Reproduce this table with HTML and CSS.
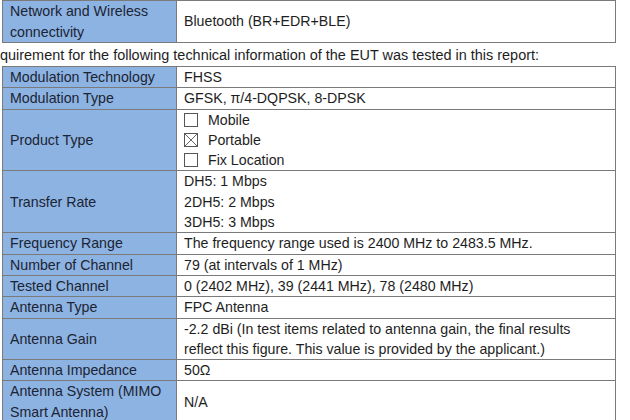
FILE: index.html
```html
<!DOCTYPE html>
<html>
<head>
<meta charset="utf-8">
<link rel="stylesheet" href="styles.css">
</head>
<body>
<div class="page">
<table class="spec">
  <tr class="two">
    <td class="key">Network and Wireless<br>connectivity</td>
    <td class="val">Bluetooth (BR+EDR+BLE)</td>
  </tr>
</table>
<p class="note">quirement for the following technical information of the EUT was tested in this report:</p>
<table class="spec">
  <tr><td class="key">Modulation Technology</td><td class="val">FHSS</td></tr>
  <tr><td class="key">Modulation Type</td><td class="val">GFSK, π/4-DQPSK, 8-DPSK</td></tr>
  <tr>
    <td class="key">Product Type</td>
    <td class="val">
      <div class="opt"><svg class="box" viewBox="0 0 14 14"><rect x="0.5" y="0.5" width="13" height="13" fill="none" stroke="#555"/></svg>Mobile</div>
      <div class="opt"><svg class="box" viewBox="0 0 14 14"><rect x="0.5" y="0.5" width="13" height="13" fill="none" stroke="#555"/><path d="M1 1L13 13M13 1L1 13" stroke="#666" stroke-width="1"/></svg>Portable</div>
      <div class="opt"><svg class="box" viewBox="0 0 14 14"><rect x="0.5" y="0.5" width="13" height="13" fill="none" stroke="#555"/></svg>Fix Location</div>
    </td>
  </tr>
  <tr>
    <td class="key">Transfer Rate</td>
    <td class="val">DH5: 1 Mbps<br>2DH5: 2 Mbps<br>3DH5: 3 Mbps</td>
  </tr>
  <tr><td class="key">Frequency Range</td><td class="val">The frequency range used is 2400 MHz to 2483.5 MHz.</td></tr>
  <tr><td class="key">Number of Channel</td><td class="val">79 (at intervals of 1 MHz)</td></tr>
  <tr><td class="key">Tested Channel</td><td class="val">0 (2402 MHz), 39 (2441 MHz), 78 (2480 MHz)</td></tr>
  <tr><td class="key">Antenna Type</td><td class="val">FPC Antenna</td></tr>
  <tr><td class="key">Antenna Gain</td><td class="val">-2.2 dBi (In test items related to antenna gain, the final results<br>reflect this figure. This value is provided by the applicant.)</td></tr>
  <tr><td class="key">Antenna Impedance</td><td class="val">50Ω</td></tr>
  <tr><td class="key">Antenna System (MIMO<br>Smart Antenna)</td><td class="val">N/A</td></tr>
</table>
</div>
</body>
</html>
```
FILE: styles.css
```css
html, body {
  margin: 0;
  padding: 0;
  background: #fff;
}
body {
  font-family: "Liberation Sans", Arial, sans-serif;
  font-size: 14.2px;
  color: #1e1e1e;
}
.page {
  padding: 0 0 0 2px;
  width: 614px;
}
.spec {
  border-collapse: collapse;
  width: 614px;
  table-layout: fixed;
}
.spec td {
  border: 1px solid #7a7a7a;
  padding: 0 7px;
  line-height: 20.3px;
  vertical-align: middle;
  white-space: nowrap;
}
.spec .key {
  width: 159px;
  background: #8db3e2;
  color: #1c2433;
}
.spec .val {
  background: #fff;
}
.spec .two td {
  height: 41px;
}
.note {
  margin: 0 0 0 -2px;
  height: 23px;
  line-height: 25px;
  font-size: 14.45px;
  white-space: nowrap;
}
.opt {
  display: flex;
  align-items: center;
}
.box {
  width: 14px;
  height: 14px;
  margin-right: 10px;
  flex: none;
}
```
